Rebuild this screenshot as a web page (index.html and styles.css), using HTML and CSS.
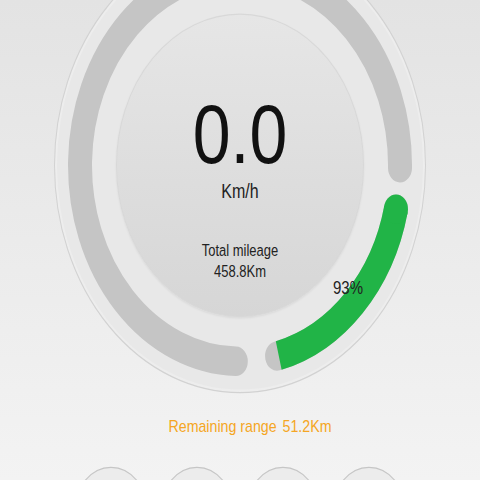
FILE: index.html
```html
<!DOCTYPE html>
<html lang="en">

<head>
    <meta charset="UTF-8" />
    <meta name="viewport" content="width=device-width, initial-scale=1.0" />
    <title>Dashboard</title>
    <link rel="stylesheet" href="styles.css">
</head>

<body>
    <div class="app">
        <!-- Speed dial -->
        <div class="dial">
            <svg class="arcs" viewBox="0 0 372 372">
                <path class="track" d="M181.8 345.95 A160 160 0 1 1 346 187.9" />
                <path class="track" d="M341.97 221.72 A160 160 0 0 1 223.08 341.65" />
                <path class="charge" d="M341.97 221.72 A160 160 0 0 1 224.71 341.25" />
                <circle class="charge-cap" cx="341.97" cy="221.72" r="12" />
            </svg>
            <div class="face">
                <div class="speed">0.0</div>
                <div class="unit">Km/h</div>
                <div class="mileage">Total mileage<br/>458.8Km</div>
            </div>
            <div class="battery">93%</div>
        </div>

        <p class="range"><span>Remaining range</span><span>51.2Km</span></p>

        <div class="actions">
            <div class="action"></div>
            <div class="action"></div>
            <div class="action"></div>
            <div class="action"></div>
        </div>
    </div>
</body>

</html>
```

FILE: styles.css
```css
/* Page */

html,
body {
    height: 100%;
    overflow: hidden;
}

body {
    margin: 0;
    font-family: "Liberation Sans", Arial, sans-serif;
    background: linear-gradient(#e3e3e3, #f3f3f3);
    color: #222;
}

/* the screen is drawn a bit taller than wide */
.app {
    display: flow-root;
    transform: scaleY(1.225);
    transform-origin: top center;
}
/* Dial */

.dial {
    position: relative;
    width: 372px;
    height: 372px;
    margin: -51px auto 0;
    box-sizing: border-box;
    border: 1px solid #d2d2d2;
    border-radius: 50%;
    background: #e8e8e8;
    box-shadow: inset 0 0 0 2px #ededed;
    display: flex;
    align-items: center;
    justify-content: center;
}

.arcs {
    position: absolute;
    left: -1px;
    top: -1px;
    width: 372px;
    height: 372px;
}

.arcs path {
    fill: none;
    stroke-width: 24;
}

.track {
    stroke: #c5c5c5;
    stroke-linecap: round;
}

.charge {
    stroke: #21b447;
    stroke-linecap: butt;
}

.charge-cap {
    fill: #21b447;
}

.face {
    position: relative;
    width: 248px;
    height: 248px;
    box-sizing: border-box;
    padding-top: 63px;
    border: 1px solid #d8d8d8;
    border-radius: 50%;
    background: linear-gradient(#e6e6e6, #d6d6d6);
    box-shadow: 0 1px 2px rgba(0, 0, 0, 0.06);
    display: flex;
    flex-direction: column;
    align-items: center;
    text-align: center;
}

.speed {
    font-size: 68px;
    line-height: 68px;
    color: #111;
}

.unit {
    margin-top: 6px;
    font-size: 16px;
    line-height: 16px;
}

.mileage {
    margin-top: 31px;
    font-size: 13px;
    line-height: 17px;
}

.battery {
    position: absolute;
    left: 278px;
    top: 277px;
    font-size: 15px;
    line-height: 15px;
}
/* Range */

.range {
    display: flex;
    justify-content: center;
    gap: 6px;
    margin: 18px 0 0;
    padding-left: 20px;
    font-size: 14.2px;
    line-height: 18px;
    color: #f5a623;
}
/* Action buttons */

.actions {
    display: flex;
    justify-content: center;
    gap: 12px;
    margin-top: 24px;
}

.action {
    width: 74px;
    height: 74px;
    box-sizing: border-box;
    border: 1.5px solid #c6c6c6;
    border-radius: 50%;
    background: #ececec;
}
```
